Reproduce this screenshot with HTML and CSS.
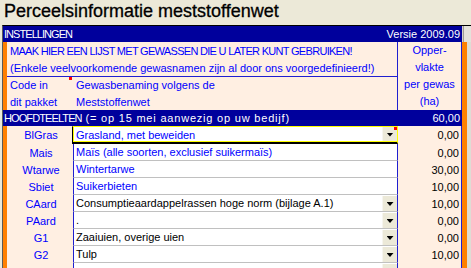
FILE: index.html
```html
<!DOCTYPE html>
<html lang="nl">
<head>
<meta charset="utf-8">
<title>Perceelsinformatie meststoffenwet</title>
<link rel="stylesheet" href="styles.css">
</head>
<body>
<div class="title">Perceelsinformatie meststoffenwet</div>
<div class="sheet">
  <div class="orange-left"></div>
  <div class="strip-right"></div>
  <div class="scroll-top"></div>
  <div class="band band1"><span class="caps-tight">INSTELLINGEN</span><span>Versie 2009.09</span></div>
  <div class="intro intro1">MAAK HIER EEN LIJST MET GEWASSEN DIE U LATER KUNT GEBRUIKEN!</div>
  <div class="intro intro2">(Enkele veelvoorkomende gewasnamen zijn al door ons voorgedefinieerd!)</div>
  <div class="hdr-code">Code in<br>dit pakket</div>
  <div class="hdr-name">Gewasbenaming volgens de<br>Meststoffenwet</div>
  <div class="hdr-area">Opper-<br>vlakte<br>per gewas<br>(ha)</div>
  <div class="band band2"><span><span class="caps">HOOFDTEELTEN</span><span class="wide"> (= op 15 mei aanwezig op uw bedijf)</span></span><span>60,00</span></div>

  <div class="code">BlGras</div>
  <div class="name active blue"><span>Grasland, met beweiden</span><span class="drop flagged"></span></div>
  <div class="num">0,00</div>

  <div class="code">Mais</div>
  <div class="name blue"><span>Maïs (alle soorten, exclusief suikermaïs)</span></div>
  <div class="num">0,00</div>

  <div class="code">Wtarwe</div>
  <div class="name blue"><span>Wintertarwe</span></div>
  <div class="num">30,00</div>

  <div class="code">Sbiet</div>
  <div class="name blue"><span>Suikerbieten</span></div>
  <div class="num">10,00</div>

  <div class="code">CAard</div>
  <div class="name"><span>Consumptieaardappelrassen hoge norm (bijlage A.1)</span><span class="drop"></span></div>
  <div class="num">10,00</div>

  <div class="code">PAard</div>
  <div class="name"><span>.</span><span class="drop"></span></div>
  <div class="num">0,00</div>

  <div class="code">G1</div>
  <div class="name"><span>Zaaiuien, overige uien</span><span class="drop"></span></div>
  <div class="num">0,00</div>

  <div class="code">G2</div>
  <div class="name"><span>Tulp</span><span class="drop"></span></div>
  <div class="num">10,00</div>

  <div class="code"></div>
  <div class="name"><span></span><span class="drop"></span></div>
  <div class="num"></div>
</div>
</body>
</html>
```

FILE: styles.css
```css
html, body {
  margin: 0;
  padding: 0;
}
body {
  width: 471px;
  height: 268px;
  overflow: hidden;
  background: #ECE9D8;
  font-family: "Liberation Sans", Arial, sans-serif;
  font-size: 11px;
}
.title {
  height: 25px;
  box-sizing: border-box;
  padding: 0 0 0 4px;
  line-height: 23px;
  font-size: 18px;
  font-weight: normal;
  color: #000;
  -webkit-text-stroke: 0.3px #000;
}
.sheet {
  margin-left: 2px;
  height: 243px;
  box-sizing: border-box;
  border-top: 1px solid #000;
  border-left: 1px solid #5a5a5a;
  overflow: hidden;
  display: grid;
  grid-template-columns: 4px 66px 325px 64px 9px;
  grid-template-rows: 16px 17px 18px 16px 17px 16px 18px;
  grid-auto-rows: 17px;
}
.orange-left {
  grid-column: 1;
  grid-row: 2 / 30;
  background: #FF8000;
}
.strip-right {
  grid-column: 5;
  grid-row: 2 / 30;
  background: linear-gradient(to right, #FF8000 0, #FF8000 5px, #DEDCD4 5px);
}
.scroll-top {
  grid-column: 5;
  grid-row: 1;
  background: linear-gradient(to right, #D6D3CA 0, #D6D3CA 1px, #9E9C94 1px, #9E9C94 2px, #E4E2DA 2px);
}
.band {
  grid-column: 1 / 5;
  background: #00009C;
  color: #fff;
  display: flex;
  justify-content: space-between;
  align-items: center;
  padding: 0 2px 0 1px;
  white-space: nowrap;
}
.band1 { grid-row: 1; }
.band2 { grid-row: 6; }
.caps-tight { letter-spacing: -0.95px; }
.caps { letter-spacing: -0.9px; }
.wide { letter-spacing: 0.8px; }
.intro {
  grid-column: 2 / 4;
  background: #FFEFE2;
  color: #0000FF;
  border-right: 1px solid #1F1FD0;
  padding-left: 3px;
  display: flex;
  align-items: center;
  white-space: nowrap;
  overflow: hidden;
}
.intro1 {
  grid-row: 2;
  letter-spacing: -0.7px;
}
.intro2 {
  grid-row: 3;
  border-bottom: 1px solid #1F1FD0;
}
.hdr-code {
  grid-column: 2;
  grid-row: 4 / 6;
  position: relative;
  background: #FFEFE2;
  color: #0000FF;
  padding: 0 0 0 3px;
  line-height: 16.5px;
}
.hdr-code::after {
  content: "";
  position: absolute;
  top: 0;
  right: 1px;
  width: 3px;
  height: 3px;
  background: #FF0000;
}
.hdr-name {
  grid-column: 3;
  grid-row: 4 / 6;
  background: #FFEFE2;
  color: #0000FF;
  border-right: 1px solid #1F1FD0;
  padding-left: 3px;
  line-height: 16.5px;
}
.hdr-area {
  grid-column: 4;
  grid-row: 2 / 6;
  background: #FFEFE2;
  color: #0000FF;
  border-right: 1px solid #1F1FD0;
  text-align: center;
  line-height: 17px;
}
.code {
  grid-column: 2;
  background: #FFEFE2;
  color: #0000FF;
  display: flex;
  align-items: center;
  justify-content: center;
  padding-left: 2px;
}
.name {
  grid-column: 3;
  background: #fff;
  color: #000;
  border-left: 1px solid #1F1FD0;
  border-right: 1px solid #1F1FD0;
  border-bottom: 1px solid #C0C0C0;
  display: flex;
  align-items: center;
  justify-content: space-between;
  padding-left: 2px;
  white-space: nowrap;
  overflow: hidden;
}
.name.blue { color: #0000FF; }
.name.active {
  margin-left: -1px;
  border-left: 1px solid #000;
  border-top: 1px solid #FFFF00;
  border-right: 1px solid #FFFF00;
  border-bottom: 2px solid #000;
  box-shadow: inset 1px 0 0 #FFFF00, inset 0 -1px 0 #FFFF00;
  padding-left: 3px;
}
.drop {
  position: relative;
  flex: none;
  align-self: stretch;
  width: 15px;
  margin-top: 1px;
  background: #ECE9D8;
  border-left: 1px solid #F6F5EF;
  box-sizing: border-box;
  display: flex;
  align-items: center;
  justify-content: center;
}
.drop::before {
  content: "";
  width: 7px;
  height: 4px;
  margin-top: 1px;
  background: #000;
  clip-path: polygon(0 0, 100% 0, 50% 100%);
}
.active .drop {
  margin-top: 0;
  margin-bottom: 1px;
}
.drop.flagged::after {
  content: "";
  position: absolute;
  top: 0;
  right: 0;
  width: 3px;
  height: 3px;
  background: #FF0000;
}
.num {
  grid-column: 4;
  background: #FFEFE2;
  color: #000;
  border-right: 1px solid #1F1FD0;
  display: flex;
  align-items: center;
  justify-content: flex-end;
  padding-right: 2px;
}
```
